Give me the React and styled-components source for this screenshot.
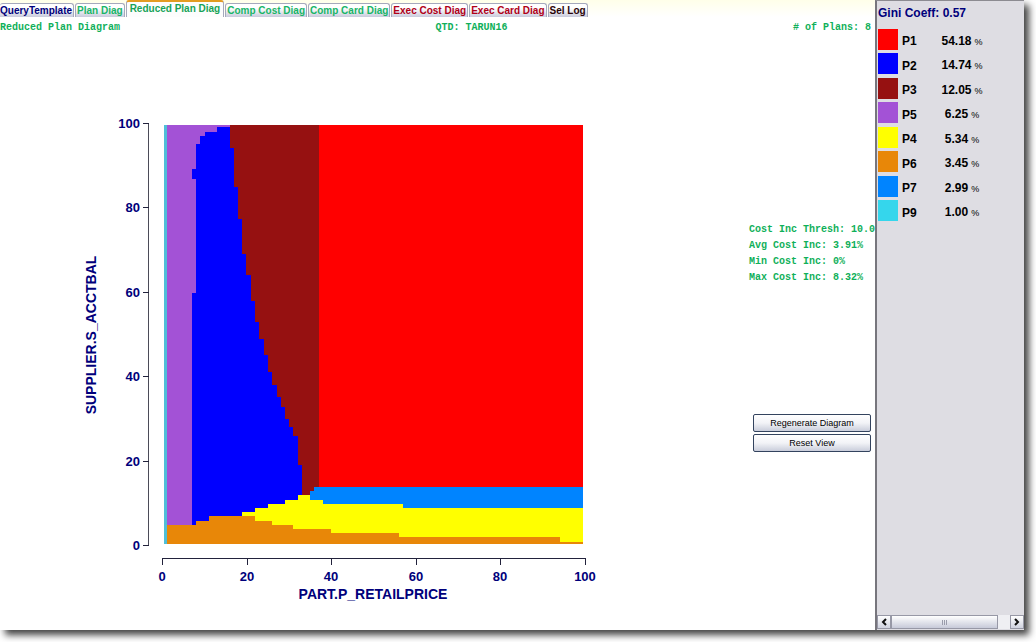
import React, { useState } from "react";
import styled, { createGlobalStyle } from "styled-components";

const Global = createGlobalStyle`
  *, *::before, *::after { box-sizing: border-box; }
  body { margin: 0; background: #fff; font-family: "Liberation Sans", Arial, sans-serif; }
  button { font: inherit; margin: 0; padding: 0; cursor: pointer; }
`;

const Page = styled.div`
  min-height: 100vh;
  padding: 0 12px 12px 0;
  display: grid;
  overflow: hidden;
`;

const Frame = styled.div`
  display: grid;
  grid-template-columns: minmax(0, 1fr) 149px;
  background: #fff;
  box-shadow: 5px 5px 7px 0 #444;
`;

const Main = styled.main`
  display: flex;
  flex-direction: column;
  min-width: 0;
`;

const TabBar = styled.div`
  display: flex;
  align-items: flex-end;
  gap: 1px;
  height: 17px;
  background: linear-gradient(#ffffe9, #fff);
`;

const Tab = styled.button`
  height: ${(p) => (p.$active ? 17 : 14)}px;
  padding: ${(p) => (p.$active ? "0 3px 2px" : "0 1px")};
  border: 1px solid #a5a9bc;
  border-top: ${(p) => (p.$active ? "2px solid #e39c22" : "1px solid #a5a9bc")};
  border-bottom: 0;
  border-radius: 3px 3px 0 0;
  background: ${(p) => (p.$active ? "#fdfdfd" : "linear-gradient(#fff 30%, #c9cbdc)")};
  color: ${(p) => p.$color};
  font: bold 10px/12px "Liberation Sans", Arial, sans-serif;
  white-space: nowrap;
  &:first-child { border-left: 0; padding-left: 0; }
`;

const Info = styled.div`
  display: grid;
  grid-template-columns: 1fr 1fr;
  padding: 5px 4px 0 0;
  color: #10b05a;
  font: bold 10px/12px "Liberation Mono", "Courier New", monospace;
`;

const InfoEnd = styled.div`
  display: flex;
  justify-content: space-between;
`;

const Body = styled.div`
  display: grid;
  grid-template-columns: minmax(0, 1fr) 126px;
`;

const Chart = styled.svg`
  display: block;
  width: 100%;
  height: auto;
  font: bold 13px "Liberation Sans", Arial, sans-serif;
  fill: #00007b;
`;

const AxisTitle = styled.text`
  font-size: 14px;
  text-anchor: middle;
`;

const Controls = styled.aside`
  padding: 190px 4px 0 0;
`;

const Stats = styled.div`
  display: grid;
  gap: 4px;
  color: #10b05a;
  font: bold 10px/12px "Liberation Mono", "Courier New", monospace;
  white-space: nowrap;
`;

const Actions = styled.div`
  display: grid;
  gap: 2px;
  margin: 130px 0 0 4px;
`;

const ActionButton = styled.button`
  height: 18px;
  border: 1px solid #33435e;
  border-radius: 2px;
  background: linear-gradient(#fff, #f2f3f7 50%, #c9cddb);
  color: #000;
  font-size: 9px;
  line-height: 12px;
`;

const Side = styled.aside`
  display: flex;
  flex-direction: column;
  background: #dedde3;
  border-left: 2px solid #77767d;
  border-top: 1px solid #8c8b91;
`;

const Gini = styled.h2`
  margin: 0;
  padding: 5px 1px 0;
  color: #00007b;
  font-size: 12px;
  line-height: 14px;
`;

const Legend = styled.table`
  height: 196px;
  margin: 7px 0 0 1px;
  border-collapse: collapse;
  table-layout: fixed;
  width: 106px;
  font-size: 12px;
  line-height: 14px;
  color: #000;
  td, th { padding: 0; vertical-align: middle; font-weight: bold; }
  th { width: 38px; padding-top: 4px; text-align: left; }
  td:first-child { width: 24px; }
  td:last-child { padding-top: 4px; text-align: center; }
`;

const Swatch = styled.div`
  width: 20px;
  height: 21px;
  background: ${(p) => p.$color};
`;

const Unit = styled.span`
  margin-left: 3px;
  font-size: 9px;
  font-weight: normal;
`;

const ScrollBar = styled.div`
  display: flex;
  height: 14px;
  margin: auto 0 1px;
  background: #efeff3;
`;

const ScrollButton = styled.button`
  display: grid;
  place-items: center;
  width: 14px;
  border: 1px solid #9798a6;
  background: linear-gradient(#fff, #cfd2df);
`;

const Thumb = styled.div`
  display: flex;
  justify-content: center;
  align-items: center;
  gap: 1px;
  flex: 1;
  margin-right: 12px;
  border: 1px solid #9798a6;
  background: linear-gradient(#fff, #c7cad9);
`;

const Grip = styled.i`
  width: 1px;
  height: 5px;
  background: #9a9cab;
`;

const TABS = [
  ["QueryTemplate", "#00007b"],
  ["Plan Diag", "#18b567"],
  ["Reduced Plan Diag", "#18a358"],
  ["Comp Cost Diag", "#18b567"],
  ["Comp Card Diag", "#18b567"],
  ["Exec Cost Diag", "#b00018"],
  ["Exec Card Diag", "#b00018"],
  ["Sel Log", "#2b0508"],
];

const PLANS = [
  ["P1", "#ff0000", "54.18"],
  ["P2", "#0000ff", "14.74"],
  ["P3", "#961111", "12.05"],
  ["P5", "#a352d6", "6.25"],
  ["P4", "#ffff00", "5.34"],
  ["P6", "#e88708", "3.45"],
  ["P7", "#0084ff", "2.99"],
  ["P9", "#35d6ec", "1.00"],
];

const TICKS = [0, 20, 40, 60, 80, 100];
const xAt = (v) => Math.round(162 + v * 4.23);
const yAt = (v) => Math.round(545 - v * 4.22);

function PlanDiagram() {
  return (
    <Chart viewBox="0 34 749 576" role="img" aria-label="Reduced plan diagram">
      <g shapeRendering="crispEdges">
        <path fill="#4fbfd8" d="M164 125H167V544H164Z" />
        <path fill="#a352d6" d="M167 125H240V544H167Z" />
        <path fill="#961111" d="M230 125H319V500H230Z" />
        <path
          fill="#0000ff"
          d="M217 127H230V148H234V187H238V219H242V254H246V275H251V301H255V322H259V339H264V355H268V372H272V385H277V397H281V407H285V419H289V427H293V436H298V465H302V544H192V293H196V179H192V169H196V144H200V136H205V132H217Z"
        />
        <path fill="#ff0000" d="M319 125H583V500H319Z" />
        <path fill="#0084ff" d="M310 491H314V487H583V544H310Z" />
        <path
          fill="#ffff00"
          d="M242 512H255V508H268V504H285V500H298V495H310V500H323V504H403V508H583V544H242Z"
        />
        <path
          fill="#e88708"
          d="M167 525H196V521H209V516H255V521H272V525H293V529H331V533H399V537H560V542H583V544H167Z"
        />
        <path fill="#4b4b58" d="M148 123H149V546H148Z" />
        <path fill="#22223c" d="M162 558H585V559H162Z" />
        {TICKS.map((v) => (
          <g key={v} fill="#22223c">
            <rect x="143" y={yAt(v)} width="6" height="1" />
            <rect x={xAt(v)} y="558" width="1" height="7" />
          </g>
        ))}
      </g>
      {TICKS.map((v) => (
        <g key={v}>
          <text x="140" y={yAt(v) + 5} textAnchor="end">{v}</text>
          <text x={xAt(v)} y="581" textAnchor="middle">{v}</text>
        </g>
      ))}
      <AxisTitle x="373" y="599">PART.P_RETAILPRICE</AxisTitle>
      <AxisTitle transform="translate(96 335) rotate(-90)">SUPPLIER.S_ACCTBAL</AxisTitle>
    </Chart>
  );
}

function Arrow({ d }) {
  return (
    <svg width="8" height="8" viewBox="0 0 8 8" fill="none" stroke="#111" strokeWidth="2">
      <path d={d} />
    </svg>
  );
}

export default function App() {
  const [active, setActive] = useState("Reduced Plan Diag");
  return (
    <>
      <Global />
      <Page>
        <Frame>
          <Main>
            <TabBar role="tablist">
              {TABS.map(([name, color]) => (
                <Tab
                  key={name}
                  role="tab"
                  aria-selected={name === active}
                  $active={name === active}
                  $color={color}
                  onClick={() => setActive(name)}
                >
                  {name}
                </Tab>
              ))}
            </TabBar>
            <Info>
              <div>Reduced Plan Diagram</div>
              <InfoEnd>
                <div>QTD: TARUN16</div>
                <div># of Plans: 8</div>
              </InfoEnd>
            </Info>
            <Body>
              <PlanDiagram />
              <Controls>
                <Stats>
                  <div>Cost Inc Thresh: 10.0</div>
                  <div>Avg Cost Inc: 3.91%</div>
                  <div>Min Cost Inc: 0%</div>
                  <div>Max Cost Inc: 8.32%</div>
                </Stats>
                <Actions>
                  <ActionButton>Regenerate Diagram</ActionButton>
                  <ActionButton>Reset View</ActionButton>
                </Actions>
              </Controls>
            </Body>
          </Main>
          <Side>
            <Gini>Gini Coeff: 0.57</Gini>
            <Legend>
              <tbody>
                {PLANS.map(([name, color, share]) => (
                  <tr key={name}>
                    <td><Swatch $color={color} /></td>
                    <th scope="row">{name}</th>
                    <td>{share}<Unit>%</Unit></td>
                  </tr>
                ))}
              </tbody>
            </Legend>
            <ScrollBar>
              <ScrollButton aria-label="Scroll left"><Arrow d="M6 1L3 4L6 7" /></ScrollButton>
              <Thumb><Grip /><Grip /><Grip /></Thumb>
              <ScrollButton aria-label="Scroll right"><Arrow d="M2 1L5 4L2 7" /></ScrollButton>
            </ScrollBar>
          </Side>
        </Frame>
      </Page>
    </>
  );
}
